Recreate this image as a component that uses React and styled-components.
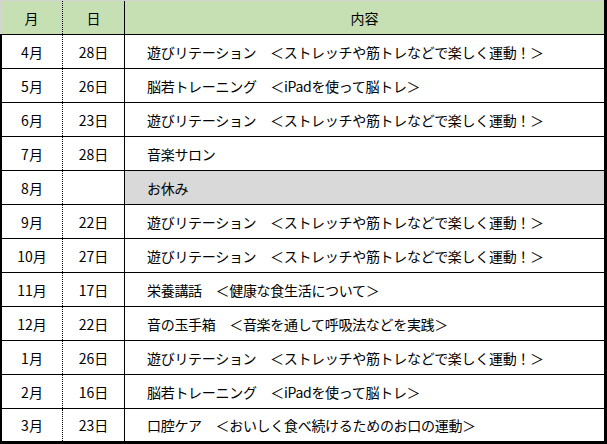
import React from "react";
import styled, { createGlobalStyle, css } from "styled-components";

const GlobalStyle = createGlobalStyle`
  html, body {
    margin: 0;
    padding: 0;
    background: #ffffff;
  }
  body {
    font-family: "Noto Sans CJK JP", "Liberation Sans", sans-serif;
    color: #000000;
  }
`;

const schedule = [
  { month: "4月", day: "28日", text: "遊びリテーション　＜ストレッチや筋トレなどで楽しく運動！＞" },
  { month: "5月", day: "26日", text: "脳若トレーニング　＜iPadを使って脳トレ＞" },
  { month: "6月", day: "23日", text: "遊びリテーション　＜ストレッチや筋トレなどで楽しく運動！＞" },
  { month: "7月", day: "28日", text: "音楽サロン" },
  { month: "8月", day: "", text: "お休み", off: true },
  { month: "9月", day: "22日", text: "遊びリテーション　＜ストレッチや筋トレなどで楽しく運動！＞" },
  { month: "10月", day: "27日", text: "遊びリテーション　＜ストレッチや筋トレなどで楽しく運動！＞" },
  { month: "11月", day: "17日", text: "栄養講話　＜健康な食生活について＞" },
  { month: "12月", day: "22日", text: "音の玉手箱　＜音楽を通して呼吸法などを実践＞" },
  { month: "1月", day: "26日", text: "遊びリテーション　＜ストレッチや筋トレなどで楽しく運動！＞" },
  { month: "2月", day: "16日", text: "脳若トレーニング　＜iPadを使って脳トレ＞" },
  { month: "3月", day: "23日", text: "口腔ケア　＜おいしく食べ続けるためのお口の運動＞" },
];

const Sheet = styled.div`
  width: 607px;
  height: 444px;
  box-sizing: border-box;
  border-right: 3px solid #000;
  overflow: hidden;
`;

const Row = styled.div`
  display: grid;
  grid-template-columns: 63px 62px 1fr;
  box-sizing: border-box;
  height: 34px;
  border-bottom: 1px solid #000;
  font-size: 14px;

  ${(p) =>
    p.$header &&
    css`
      height: 35px;
      border-top: 1px solid #d4d4d4;
      background: #c6e0b4;
    `}

  ${(p) =>
    p.$last &&
    css`
      height: 35px;
      border-bottom: 3px solid #000;
    `}
`;

const Cell = styled.div`
  display: flex;
  align-items: center;
  justify-content: center;
  box-sizing: border-box;
  white-space: nowrap;
  line-height: 1;
`;

const MonthCell = styled(Cell)`
  border-left: ${(p) => (p.$header ? "1px solid #d4d4d4" : "2px solid #000")};
  border-right: 1px dotted #000;
`;

const DayCell = styled(Cell)`
  border-right: 1px solid #000;
`;

const ContentCell = styled(Cell)`
  justify-content: ${(p) => (p.$header ? "center" : "flex-start")};
  padding-left: ${(p) => (p.$header ? "0" : "22px")};
  letter-spacing: ${(p) => (p.$header ? "0" : "-0.3px")};
  background: ${(p) => (p.$off ? "#d9d9d9" : "transparent")};
`;

export default function App() {
  return (
    <>
      <GlobalStyle />
      <Sheet>
        <Row $header>
          <MonthCell $header>月</MonthCell>
          <DayCell>日</DayCell>
          <ContentCell $header>内容</ContentCell>
        </Row>
        {schedule.map((item, i) => (
          <Row key={item.month} $last={i === schedule.length - 1}>
            <MonthCell>{item.month}</MonthCell>
            <DayCell>{item.day}</DayCell>
            <ContentCell $off={item.off}>{item.text}</ContentCell>
          </Row>
        ))}
      </Sheet>
    </>
  );
}
